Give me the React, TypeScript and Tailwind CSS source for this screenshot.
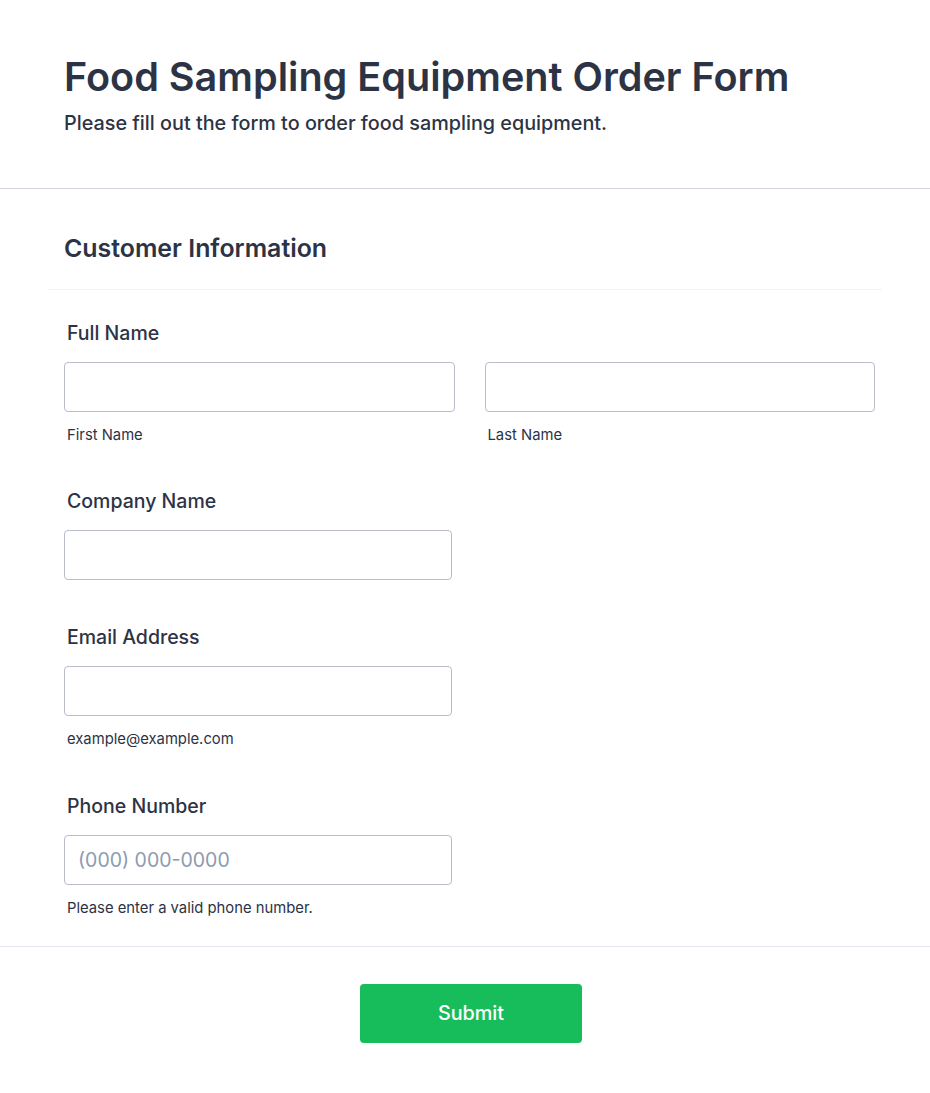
const font = { fontFamily: 'Inter, "Noto Sans", sans-serif' };

function Field({
  label,
  sublabel,
  placeholder,
}: {
  label: string;
  sublabel?: string;
  placeholder?: string;
}) {
  return (
    <div className="pl-[17px] pr-[7px] pt-[22px] pb-[23px]">
      <label className="block pl-[3px] text-[19.5px] leading-6 font-medium text-[#2c3345]">{label}</label>
      <input
        type="text"
        placeholder={placeholder}
        className="mt-[17px] block h-[50px] w-[388px] rounded-[4px] border border-[#b8bdc9] bg-white pl-[13px] text-[19.5px] text-[#2c3345] placeholder:text-[#8d9ab2] outline-none"
      />
      {sublabel && (
        <div className="mt-[13px] pl-[3px] text-[14.8px] leading-5 text-[#2c3345]">{sublabel}</div>
      )}
    </div>
  );
}

export default function App() {
  return (
    <div className="min-h-screen bg-white" style={font}>
      {/* header */}
      <div className="border-b border-[#d3d3e6] px-16 pt-[53px] pb-[53px]">
        <h1 className="text-[39.6px] leading-[48px] font-semibold text-[#2c3345]">
          Food Sampling Equipment Order Form
        </h1>
        <p className="mt-[10px] text-[19.8px] leading-6 font-medium text-[#2c3345]">
          Please fill out the form to order food sampling equipment.
        </p>
      </div>

      <div className="ml-[47px] w-[835px]">
        <div className="border-b border-[#f3f3f8] pl-[17px] pt-[43px] pb-[25px]">
          <h2 className="text-[24.9px] leading-8 font-semibold text-[#2c3345]">Customer Information</h2>
        </div>

        <div className="pt-[9px] pb-[5px]">
          <div className="pl-[17px] pr-[7px] py-[22px]">
            <label className="block pl-[3px] text-[19.5px] leading-6 font-medium text-[#2c3345]">Full Name</label>
            <div className="mt-[17px] grid grid-cols-2 gap-[30px]">
              {['First Name', 'Last Name'].map((s) => (
                <div key={s}>
                  <input
                    type="text"
                    className="block h-[50px] w-full rounded-[4px] border border-[#b8bdc9] bg-white pl-[13px] text-[19.5px] outline-none"
                  />
                  <div className="mt-[13px] pl-[3px] text-[14.8px] leading-5 text-[#2c3345]">{s}</div>
                </div>
              ))}
            </div>
          </div>
          <Field label="Company Name" />
          <Field label="Email Address" sublabel="example@example.com" />
          <Field label="Phone Number" placeholder="(000) 000-0000" sublabel="Please enter a valid phone number." />
        </div>
      </div>

      <div className="border-t border-[#e6e6ef] pt-[37px] pb-[50px] flex justify-center">
        <button className="ml-[12px] h-[59px] w-[222px] rounded-[4px] bg-[#18bd5b] text-[19.8px] font-medium text-white">
          Submit
        </button>
      </div>
    </div>
  );
}
